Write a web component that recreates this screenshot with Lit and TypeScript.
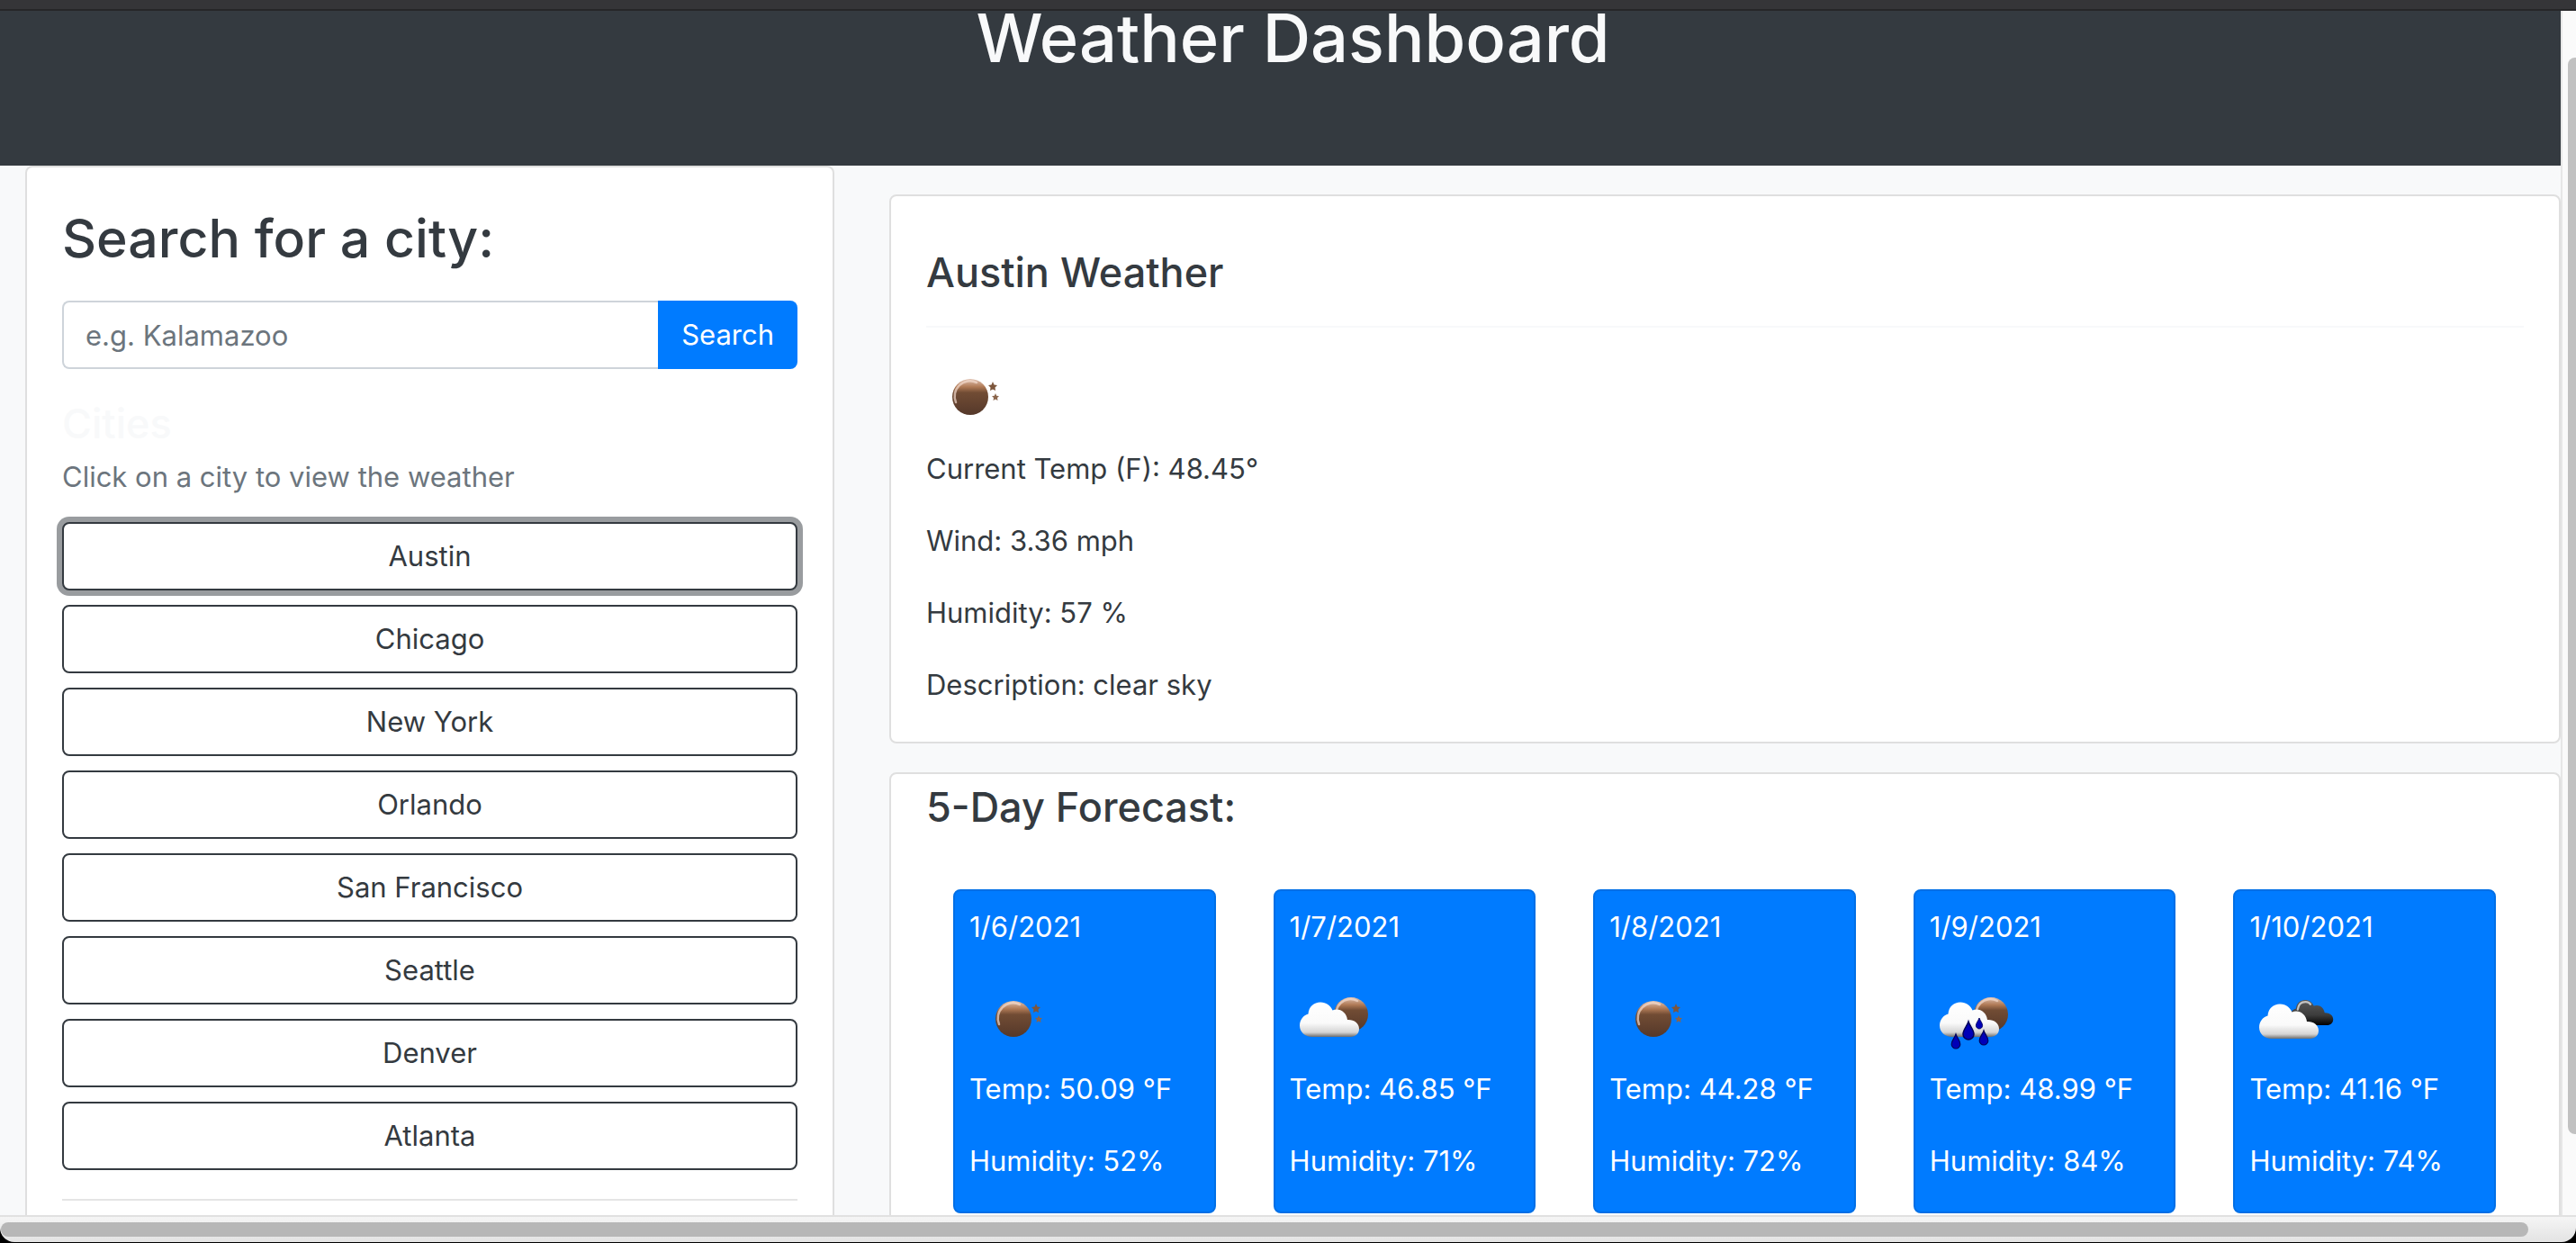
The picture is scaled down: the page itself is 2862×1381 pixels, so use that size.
import { LitElement, html, css, svg } from "lit";
import { customElement, property, state } from "lit/decorators.js";

type Sky = "clear" | "few" | "rain" | "broken";

interface Day {
  date: string;
  sky: Sky;
  temp: string;
  humidity: string;
}

const CITIES = ["Austin", "Chicago", "New York", "Orlando", "San Francisco", "Seattle", "Denver", "Atlanta"];

const DAYS: Day[] = [
  { date: "1/6/2021", sky: "clear", temp: "50.09", humidity: "52" },
  { date: "1/7/2021", sky: "few", temp: "46.85", humidity: "71" },
  { date: "1/8/2021", sky: "clear", temp: "44.28", humidity: "72" },
  { date: "1/9/2021", sky: "rain", temp: "48.99", humidity: "84" },
  { date: "1/10/2021", sky: "broken", temp: "41.16", humidity: "74" },
];

const CLOUD = "M25 70 C17 70 11 64.500 11 57.500 C11 51 15 46 20.500 44.500 C21 36.500 27 31.500 34 31.500 C40.500 31.500 45 35 47.500 40.500 C55 37.500 63 42.500 64 51 C71 50.500 77 54.500 77 61 C77 66.500 73 70 67.500 70 Z";

@customElement("sky-icon")
export class SkyIcon extends LitElement {
  @property() sky: Sky = "clear";

  static styles = css`
    :host { display: block; width: 100px; height: 100px; }
    .art { display: block; width: 100%; height: 100%; }
  `;

  private moon(cx: number, cy: number, r: number) {
    return svg`
      <circle cx=${cx} cy=${cy} r=${r} fill="url(#moon)"></circle>
      <path d="M${cx - r + 4} ${cy + 6} A${r - 3} ${r - 3} 0 0 1 ${cx + 7} ${cy - r + 4}"
        fill="none" stroke="#f3dccf" stroke-opacity="0.7" stroke-width="2.500" stroke-linecap="round"></path>`;
  }

  private drop(x: number, y: number, s: number) {
    return svg`<path transform="translate(${x} ${y}) scale(${s})"
      d="M0 -10 C1.500 -5 6 -1 6 4 C6 7.500 3 10 0 10 C-3 10 -6 7.500 -6 4 C-6 -1 -1.500 -5 0 -10 Z"
      fill="#0000b8" stroke="#00005c" stroke-width="1.500"></path>`;
  }

  private art() {
    const cloud = svg`<path d=${CLOUD} fill="url(#cloud)"></path>`;
    switch (this.sky) {
      case "few":
        return svg`${this.moon(68, 45, 19)}${cloud}`;
      case "rain":
        return svg`${this.moon(68, 45, 19)}${cloud}
          ${this.drop(43, 63, 1)}${this.drop(55, 55, 0.6)}${this.drop(29, 75, 0.8)}${this.drop(60, 71, 0.8)}`;
      case "broken":
        return svg`<g transform="translate(37 6) scale(0.73)">
            <path d=${CLOUD} fill="url(#dark)"></path>
            <path d="M23 46 C24 39 28 34.500 35 34.500 C38 34.500 41 36 42.500 38" fill="none"
              stroke="#c4c4c4" stroke-width="3" stroke-linecap="round"></path>
          </g>
          <g transform="translate(0 2)">${cloud}</g>`;
      default:
        return svg`${this.moon(49, 50, 20)}
          <path d="M74 33 L75.500 36.500 L79 37 L76.500 39.500 L77 43 L74 41.500 L71 43 L71.500 39.500 L69 37 L72.500 36.500 Z" fill="#7d563c"></path>
          <path d="M77 46 L78.200 48.800 L81 49 L79 51 L79.500 54 L77 52.500 L74.500 54 L75 51 L73 49 L75.800 48.800 Z" fill="#8a654b"></path>`;
    }
  }

  render() {
    return html`<svg class="art" viewBox="0 0 100 100" aria-hidden="true">
      <defs>
        <linearGradient id="moon" x1="0" y1="0" x2="0" y2="1">
          <stop offset="0" stop-color="#e0c2b2"></stop>
          <stop offset="0.22" stop-color="#b07a56"></stop>
          <stop offset="0.38" stop-color="#714c34"></stop>
          <stop offset="1" stop-color="#55382a"></stop>
        </linearGradient>
        <linearGradient id="cloud" x1="0" y1="0" x2="0" y2="1">
          <stop offset="0" stop-color="#ffffff"></stop>
          <stop offset="0.6" stop-color="#fafafa"></stop>
          <stop offset="0.87" stop-color="#d4d4d4"></stop>
          <stop offset="1" stop-color="#6e6e6e"></stop>
        </linearGradient>
        <linearGradient id="dark" x1="0" y1="0" x2="0" y2="1">
          <stop offset="0" stop-color="#5a5a5a"></stop>
          <stop offset="0.6" stop-color="#3c3c3c"></stop>
          <stop offset="1" stop-color="#000000"></stop>
        </linearGradient>
      </defs>
      ${this.art()}
    </svg>`;
  }
}

@customElement("app-root")
export class AppRoot extends LitElement {
  @state() private city = "Austin";

  static styles = css`
    :host {
      display: grid;
      grid-template-rows: 12px minmax(0, 1fr) 31px;
      grid-template-columns: minmax(0, 1fr) 17px;
      height: 100vh;
      overflow: hidden;
      background: #ffffff;
      color: #343a40;
      font: 400 31px/48px Inter, "Liberation Sans", sans-serif;
    }
    * { box-sizing: border-box; }
    h1, h2, h3, p { margin: 0; font-weight: 500; }
    p { font-weight: 400; }

    .toolbar-edge { grid-column: 1 / -1; background: #353538; border-bottom: 2px solid #262628; }
    .page { display: flex; flex-direction: column; overflow: hidden; background: #f8f9fa; }

    .banner { flex: none; padding: 0 0 112px 28px; background: #343a40; text-align: center; }
    .banner-title { font-size: 74px; line-height: 60px; color: #f8f9fa; }

    .columns {
      flex: none;
      display: grid;
      grid-template-columns: 899fr 1857fr;
      gap: 61px;
      padding-left: 28px;
    }
    .panel { background: #ffffff; border: 2px solid #dfdfdf; border-radius: 8px; }
    .search-panel { padding: 40px 39px; }
    .search-title { font-size: 59px; line-height: 77px; }
    .search-form { display: flex; margin-top: 31px; }
    .search-input {
      flex: 1;
      min-width: 0;
      height: 76px;
      padding: 0 24px;
      border: 2px solid #ced4da;
      border-right: 0;
      border-radius: 8px 0 0 8px;
      background: #ffffff;
      color: #495057;
      font: inherit;
    }
    .search-input::placeholder { color: #6c757d; opacity: 1; }
    .search-button {
      padding: 0 26px;
      border: 0;
      border-radius: 0 8px 8px 0;
      background: #007bff;
      color: #ffffff;
      font: inherit;
    }
    .cities-title { margin-top: 32px; font-size: 45px; line-height: 58px; color: #f8f9fa; }
    .hint { margin-top: 6px; color: #6c757d; }
    .cities {
      display: grid;
      gap: 16px;
      margin: 26px 0 0;
      padding: 0 0 32px;
      border-bottom: 2px solid #e5e5e5;
      list-style: none;
    }
    .city {
      display: block;
      width: 100%;
      height: 76px;
      border: 2px solid #343a40;
      border-radius: 8px;
      background: #ffffff;
      color: #343a40;
      font: inherit;
    }
    .city[aria-pressed="true"] { box-shadow: 0 0 0 6px #999c9f; }

    .results { display: flex; flex-direction: column; gap: 32px; padding-top: 32px; }
    .today { padding: 56px 39px 39px; }
    .section-title { font-size: 45px; line-height: 58px; }
    .today-head { padding-bottom: 30px; border-bottom: 2px solid #f8f9fa; }
    .today-icon { margin: 27px 0 6px; }
    .readings { display: grid; gap: 32px; }
    .forecast { flex: 1; padding: 8px 70px 64px 39px; }
    .days {
      display: grid;
      grid-template-columns: repeat(5, minmax(0, 1fr));
      gap: 64px;
      margin-top: 62px;
      padding-left: 30px;
    }
    .day {
      padding: 16px 16px 32px;
      border: 2px solid #006fe6;
      border-radius: 8px;
      background: #007bff;
      color: #ffffff;
      white-space: nowrap;
    }
    .day-icon { margin: 28px 0 4px; }
    .day-humidity { margin-top: 32px; }

    .v-track { overflow: hidden; padding: 52px 0 0 6px; background: #fafafa; border-left: 2px solid #e6e6e6; }
    .v-thumb { height: 93%; margin-right: -7px; border-radius: 8px; background: #c1c1c1; }
    .h-frame { grid-column: 1 / -1; padding-bottom: 1px; background: #000000; }
    .h-track {
      height: 30px;
      padding: 6px 53px 0 1px;
      border-top: 2px solid #e1e1e1;
      border-radius: 0 0 16px 16px;
      background: linear-gradient(#f5f5f5, #e3e3e3);
    }
    .h-thumb { height: 16px; border-radius: 8px; background: #b7b7b7; }
  `;

  render() {
    return html`
      <div class="toolbar-edge"></div>
      <div class="page">
        <header class="banner"><h1 class="banner-title">Weather Dashboard</h1></header>
        <main class="columns">
          <section class="panel search-panel">
            <h2 class="search-title"><label for="city-name">Search for a city:</label></h2>
            <form class="search-form" @submit=${(e: Event) => e.preventDefault()}>
              <input class="search-input" id="city-name" type="text" placeholder="e.g. Kalamazoo" />
              <button class="search-button" type="submit">Search</button>
            </form>
            <h3 class="cities-title">Cities</h3>
            <p class="hint">Click on a city to view the weather</p>
            <ul class="cities">
              ${CITIES.map((name) => html`<li>
                <button class="city" type="button" aria-pressed=${name === this.city ? "true" : "false"}
                  @click=${() => (this.city = name)}>${name}</button>
              </li>`)}
            </ul>
          </section>
          <div class="results">
            <section class="panel today">
              <div class="today-head"><h3 class="section-title">${this.city} Weather</h3></div>
              <sky-icon class="today-icon" sky="clear"></sky-icon>
              <div class="readings">
                <p>Current Temp (F): 48.45°</p>
                <p>Wind: 3.36 mph</p>
                <p>Humidity: 57 %</p>
                <p>Description: clear sky</p>
              </div>
            </section>
            <section class="panel forecast">
              <h3 class="section-title">5-Day Forecast:</h3>
              <div class="days">
                ${DAYS.map((d) => html`<article class="day">
                  <p>${d.date}</p>
                  <sky-icon class="day-icon" sky=${d.sky}></sky-icon>
                  <p>Temp: ${d.temp} °F</p>
                  <p class="day-humidity">Humidity: ${d.humidity}%</p>
                </article>`)}
              </div>
            </section>
          </div>
        </main>
      </div>
      <div class="v-track"><div class="v-thumb"></div></div>
      <div class="h-frame"><div class="h-track"><div class="h-thumb"></div></div></div>
    `;
  }
}
